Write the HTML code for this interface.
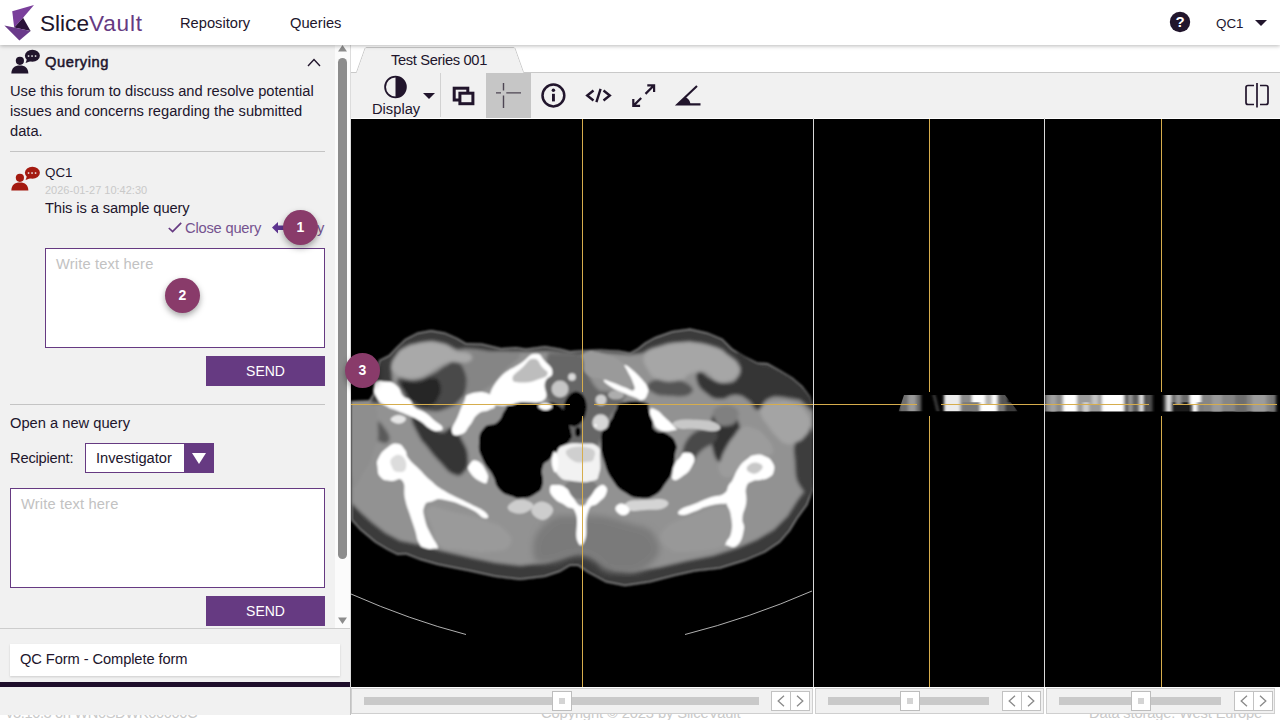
<!DOCTYPE html>
<html><head><meta charset="utf-8">
<style>
*{box-sizing:border-box;margin:0;padding:0}
html,body{width:1280px;height:720px;overflow:hidden;background:#fff;font-family:"Liberation Sans",sans-serif;color:#21152c}
.abs{position:absolute}
svg{position:absolute;overflow:visible}
#hdr{position:absolute;left:0;top:0;width:1280px;height:45px;background:#fff;box-shadow:0 1px 4px rgba(0,0,0,.28);z-index:5}
.t{position:absolute;white-space:nowrap;font-size:14.7px;line-height:17px}
#left{position:absolute;left:0;top:45px;width:350px;height:669.6px;background:#f1f1f1;z-index:2}
.ta{position:absolute;background:#fff;border:1px solid #663a82}
.ph{color:#c2c2c2}
.send{position:absolute;background:#663a82;color:#fff;font-size:14px;text-align:center;width:119px;height:30px;line-height:30px}
.hr{position:absolute;height:1px;background:#c4c4c4}
.badge{position:absolute;width:35px;height:35px;border-radius:50%;background:#893b6a;color:#fff;font-weight:bold;font-size:14px;text-align:center;line-height:35px;box-shadow:0 3px 6px rgba(0,0,0,.35);z-index:9}
#main{position:absolute;left:351px;top:45px;width:929px;height:669px;background:#fff;z-index:2}
.foot{position:absolute;white-space:nowrap;font-size:14.7px;color:#c9c9c9;top:704.5px;line-height:17px;z-index:1}
.vp{position:absolute;top:74px;height:568px;background:#000;overflow:hidden}
.sb{position:absolute;top:643px;height:26px;background:#f1f1f1;border:1px solid #cfcfcf}
.sb .trk{position:absolute;top:8px;height:8px;background:#c9c9c9}
.sb .th{position:absolute;top:2px;width:20px;height:20px;background:#fff;border:1px solid #bdbdbd}
.sb .th i{position:absolute;left:6px;top:6px;width:6px;height:6px;background:#d4d4d4}
.sb .ar{position:absolute;top:2px;width:20px;height:20px;background:#fff;border:1px solid #c2c2c2}
.gold{position:absolute;background:#d6ad4d}
</style></head><body>
<div class="foot" id="f1" style="letter-spacing:-0.4px;left:6px">v3.10.3 on WN0SDWK00000C</div>
<div class="foot" id="f2" style="letter-spacing:-0.1px;left:541px">Copyright © 2023 by SliceVault</div>
<div class="foot" id="f3" style="letter-spacing:-0.15px;left:1089px">Data storage: West Europe</div>

<div id="hdr">
  <svg style="left:0;top:0" width="45" height="45" viewBox="0 0 45 45">
    <polygon points="12.2,11.3 34,5.1 23.1,17.8 14.2,27.5" fill="#7a3f9b"/>
    <polygon points="23.1,17.8 14.2,27.5 30.6,30.9" fill="#2b1239"/>
    <polygon points="4.4,25.6 14.2,27.5 30.6,30.9 19.4,40.6" fill="#6a3a8a"/>
  </svg>
  <div class="t" id="logo1" style="left:40px;top:10px;font-size:22.6px;line-height:27px;color:#21152c">Slice</div>
  <div class="t" id="logo2" style="letter-spacing:0.8px;left:89px;top:10px;font-size:22.6px;line-height:27px;color:#663a82">Vault</div>
  <div class="t" id="nav1" style="left:180px;top:15px">Repository</div>
  <div class="t" id="nav2" style="left:290px;top:15px">Queries</div>
  <svg style="left:1169px;top:11px" width="22" height="22" viewBox="0 0 22 22"><circle cx="11" cy="11" r="10.2" fill="#21152c"/><text x="11" y="16.2" font-family="Liberation Sans" font-weight="bold" font-size="15" fill="#fff" text-anchor="middle">?</text></svg>
  <div class="t" id="usr" style="left:1216px;top:15px;font-size:13.4px">QC1</div>
  <svg style="left:1255px;top:20px" width="12" height="6" viewBox="0 0 12 6"><polygon points="0,0 12,0 6,6" fill="#21152c"/></svg>
</div>

<div id="left">
  <svg id="qicon" style="left:10px;top:4px" width="30" height="25" viewBox="10 166 30 25" fill="#21152c">
    <circle cx="19.9" cy="177.8" r="4.1"/><path d="M11.3 190.6 C11.6 185 14.5 182.6 19.9 182.6 S28 185 28.4 190.6 Z"/>
    <ellipse cx="32.4" cy="172.8" rx="7.5" ry="6"/><polygon points="27,176 25.6,180 31,178"/>
    <g fill="#f1f1f1"><rect x="27.8" y="172.3" width="1.5" height="1.5"/><rect x="31.3" y="172.3" width="1.5" height="1.5"/><rect x="34.8" y="172.3" width="1.5" height="1.5"/></g>
  </svg>
  <div class="t" id="qtitle" style="letter-spacing:0.55px;left:45px;top:9px;-webkit-text-stroke:0.5px #21152c">Querying</div>
  <svg style="left:307px;top:13px" width="14" height="9" viewBox="0 0 14 9"><polyline points="1,8 7,1.6 13,8" fill="none" stroke="#21152c" stroke-width="1.4"/></svg>
  <div class="t" id="p1" style="left:10px;top:38px">Use this forum to discuss and resolve potential</div>
  <div class="t" id="p2" style="left:10px;top:58px">issues and concerns regarding the submitted</div>
  <div class="t" id="p3" style="left:10px;top:78px">data.</div>
  <div class="hr" style="left:10px;top:106px;width:315px"></div>
  <svg id="ricon" style="left:10px;top:121px" width="30" height="25" viewBox="10 166 30 25" fill="#a41a10">
    <circle cx="19.9" cy="177.8" r="4.1"/><path d="M11.3 190.6 C11.6 185 14.5 182.6 19.9 182.6 S28 185 28.4 190.6 Z"/>
    <ellipse cx="32.4" cy="172.8" rx="7.5" ry="6"/><polygon points="27,176 25.6,180 31,178"/>
    <g fill="#f1f1f1"><rect x="27.8" y="172.3" width="1.5" height="1.5"/><rect x="31.3" y="172.3" width="1.5" height="1.5"/><rect x="34.8" y="172.3" width="1.5" height="1.5"/></g>
  </svg>
  <div class="t" id="qc1" style="left:45px;top:119px;font-size:13.4px">QC1</div>
  <div class="t" id="date" style="left:45px;top:139px;font-size:11px;line-height:12px;color:#c9c9c9">2026-01-27 10:42:30</div>
  <div class="t" id="msg" style="letter-spacing:-0.11px;left:45px;top:155px">This is a sample query</div>
  <svg style="left:168px;top:177px" width="14" height="11" viewBox="0 0 14 11"><polyline points="0.8,6 4.6,9.6 13.2,0.8" fill="none" stroke="#663a82" stroke-width="1.7"/></svg>
  <div class="t" id="close" style="letter-spacing:-0.2px;left:185px;top:175px;color:#75538f">Close query</div>
  <svg style="left:272px;top:177px" width="14" height="12" viewBox="0 0 14 12"><path d="M0 5.6 L6 0 V3.4 H14 V8 H6 V11.4 Z" fill="#5e3590"/></svg>
  <div class="t" id="reply" style="letter-spacing:-0.3px;left:288px;top:175px;color:#75538f">Reply</div>
  <div class="ta" style="left:45px;top:203px;width:280px;height:100px"></div>
  <div class="t ph" id="ph1" style="letter-spacing:0.15px;left:56px;top:211px">Write text here</div>
  <div class="send" style="left:206px;top:311px">SEND</div>
  <div class="hr" style="left:10px;top:359px;width:315px"></div>
  <div class="t" id="open" style="left:10px;top:370px">Open a new query</div>
  <div class="t" id="recip" style="letter-spacing:-0.2px;left:10px;top:405px">Recipient:</div>
  <div class="ta" style="left:85px;top:398px;width:129px;height:30px"></div>
  <div class="t" id="inv" style="left:96px;top:405px">Investigator</div>
  <div class="abs" style="left:184px;top:398px;width:30px;height:30px;background:#663a82"></div>
  <svg style="left:192px;top:408px" width="14" height="11" viewBox="0 0 14 11"><polygon points="0,0 14,0 7,11" fill="#fff"/></svg>
  <div class="ta" style="left:10px;top:443px;width:315px;height:100px"></div>
  <div class="t ph" id="ph2" style="letter-spacing:0.15px;left:21px;top:451px">Write text here</div>
  <div class="send" style="left:206px;top:551px">SEND</div>
  <!-- scrollbar -->
  <div class="abs" style="left:335px;top:0;width:15px;height:583px;background:#fbfbfb"></div>
  <svg style="left:338px;top:0px" width="9" height="7" viewBox="0 0 9 7"><polygon points="0,6.5 4.5,0 9,6.5" fill="#8c8c8c"/></svg>
  <div class="abs" style="left:338px;top:13px;width:9px;height:500.5px;background:#8c8c8c;border-radius:4.5px"></div>
  <svg style="left:338px;top:572px" width="9" height="7" viewBox="0 0 9 7"><polygon points="0,0.5 4.5,7 9,0.5" fill="#8c8c8c"/></svg>
  <div class="hr" style="left:0;top:583px;width:350px;background:#cdcdcd"></div>
  <div class="abs" style="left:10px;top:599px;width:330px;height:32px;background:#fff;box-shadow:0 1px 2px rgba(0,0,0,.15)"></div>
  <div class="t" id="qcform" style="letter-spacing:-0.1px;left:20px;top:606px">QC Form - Complete form</div>
  <div class="abs" style="left:0;top:637px;width:350px;height:5px;background:#1f0f2c"></div>
  <div class="abs" style="left:350px;top:0;width:1px;height:669px;background:#dcdcdc"></div><div class="abs" style="left:350px;top:642px;width:1px;height:28px;background:#c2c2c2"></div>
</div>

<div id="main">
  <!-- tab -->
  <svg style="left:0;top:0" width="929" height="30" viewBox="351 45 929 30">
    <path d="M351 72.5 H356.5 L365 48.5 Q365.5 47.5 367 47.5 H513 Q514.5 47.5 515 48.5 L523.5 72.5 H1280" fill="none" stroke="#c9c9c9" stroke-width="1"/>
    <path d="M356.8 73 L365.3 49 Q365.7 48 367 48 H513 Q514.3 48 514.7 49 L523.2 73 Z" fill="#f1f1f1"/>
  </svg>
  <div class="t" id="tab" style="letter-spacing:-0.35px;left:40px;top:7px">Test Series 001</div>
  <div class="abs" id="tb" style="left:0;top:28px;width:929px;height:45px;background:#f1f1f1"></div>
  <div class="abs" style="left:135px;top:28px;width:45px;height:45px;background:#c6c6c6"></div>
  <div class="abs" style="left:89px;top:28px;width:1px;height:44px;background:#d2d2d2"></div>
  <div class="t" id="disp" style="left:21px;top:56px">Display</div>
  <svg style="left:0;top:28px" width="929" height="45" viewBox="351 73 929 45">
    <g fill="#21152c" stroke="none">
      <circle cx="395.5" cy="87" r="10.4" fill="none" stroke="#21152c" stroke-width="1.8"/>
      <path d="M395.5 76.6 A10.4 10.4 0 0 1 395.5 97.4 Z"/>
      <polygon points="423,93 435,93 429,99"/>
      <rect x="454.2" y="88.2" width="13.6" height="11.8" fill="none" stroke="#21152c" stroke-width="3"/>
      <rect x="459.9" y="93.2" width="13" height="10.5" fill="#f1f1f1" stroke="#21152c" stroke-width="3"/>
      <circle cx="553.4" cy="95.5" r="10.9" fill="none" stroke="#21152c" stroke-width="2.5"/>
      <rect x="552" y="93.8" width="2.9" height="7.6"/><circle cx="553.4" cy="90.2" r="1.75"/>
    </g>
    <g stroke="#4d4553" stroke-width="1.4" fill="none"><path d="M503.5 83 V90.4 M503.5 95.4 V108 M496 92.9 H501 M506.3 92.9 H521"/></g>
    <g stroke="#21152c" stroke-width="2.4" fill="none" stroke-linejoin="miter">
      <path d="M593.5 90.5 L587.2 95.5 L593.5 100.5 M603.5 90.5 L609.8 95.5 L603.5 100.5 M600.6 88.8 L596.4 102.2"/>
    </g>
    <g stroke="#21152c" stroke-width="2.2" fill="none">
      <path d="M647.3 85.3 H654.1 V92.1 M654.1 85.3 L645.5 93.9 M633.3 99.1 V105.9 H640.1 M633.3 105.9 L641.2 98"/>
    </g>
    <g stroke="#21152c" stroke-width="2.1" fill="none"><path d="M700.5 104.4 H677.5 L697 86"/></g>
    <path d="M678 104.4 L685.5 97 Q690 99.5 690.5 104.4 Z" fill="#21152c"/>
    <g stroke="#21152c" stroke-width="1.7" fill="none">
      <path d="M1254 85.5 H1248 Q1246 85.5 1246 87.5 V102.5 Q1246 104.5 1248 104.5 H1254 M1260 85.5 H1266 Q1268 85.5 1268 87.5 V102.5 Q1268 104.5 1266 104.5 H1260 M1257 83 V107.5"/>
    </g>
  </svg>
  <!-- viewports -->
  <div class="vp" id="vp1" style="left:0;width:462px"><!--CT--><svg id="ct" style="left:0;top:0" width="462" height="568" viewBox="351 119 462 568">
<defs>
<filter id="b1" x="-5%" y="-5%" width="110%" height="110%"><feGaussianBlur stdDeviation="0.8"/></filter>
<filter id="b2" x="-5%" y="-5%" width="110%" height="110%"><feGaussianBlur stdDeviation="1.7"/></filter>
<filter id="b4" x="-5%" y="-5%" width="110%" height="110%"><feGaussianBlur stdDeviation="3"/></filter>
<path id="bodyp" d="M351 401 L369 400.5 L373 394 L374 386 L376 372 L379 360 L389 355 L396 347.5 L405 339 L417.5 332.5 L431 330 L445 332.5 L457.5 338 L466 343 L482 343.5 L501 348 L516 347 L526 348.5 L545 346 L560 348.5 L570 351 L585 350 L600 349.4 L619 350.6 L630 352.5 L637.5 348.5 L645 342.5 L655 337 L672 331 L690 328.5 L707.5 332.5 L722.5 338.75 L732.5 348.75 L745 356.25 L757.5 362.5 L767.5 363 L780 370 L792.5 377.5 L802.5 386 L810 396 L813 405 L813 490 L807.5 505 L797.5 518.75 L790 531 L780 542.5 L765 552.5 L745 561 L720 568.75 L695 571.5 L675 576 L650 582.5 L625 586.25 L606 582.5 L587.5 572.5 L578 566 L570 566 L560 572 L545 577 L520 580 L495 577 L470 571.5 L456 568.75 L437.5 565 L420 560 L406 554.4 L397.5 555 L387.5 550 L375 542.5 L360 530 L351 520 Z"/>
<clipPath id="bodyclip"><use href="#bodyp"/></clipPath>
</defs>
<g filter="url(#b1)">
  <use href="#bodyp" fill="#3b3b3b"/>
  <g clip-path="url(#bodyclip)">
    <use href="#bodyp" fill="none" stroke="#8c8c8c" stroke-width="2.4"/>
    <g filter="url(#b2)">
    <!-- general muscle mass -->
    <path d="M351 404 L380 403 L392 382 L391 367 L396 356 L405 348.5 L418 342.5 L432 340.5 L446 343.5 L456 349 L468 351 L500 351 L526 351.5 L550 351 L582 354 L600 352 L630 354.5 L642 353 L652 348 L668 343 L690 341 L712 346 L728 355 L738 365 L750 380 L775 396 L800 400 L813 412 L813 480 L798 500 L788 516 L774 530 L757 540 L738 548 L713 556 L688 561 L658 568 L632 572 L614 570 L600 562 L590 555 L578 553 L565 557 L547 563 L520 566 L495 563 L471 558 L441 551 L420 545 L400 541 L385 533 L371 522 L361 513 L351 503 Z" fill="#929292"/>
    <!-- darker paraspinal region -->
    <!-- upper centre muscle tone (slightly darker striated) -->
    <path d="M456.0 350.0 C468.0 345.7 482.9 350.9 500.0 352.0 C517.1 353.1 518.7 349.2 520.0 354.0 C521.3 358.8 513.0 361.5 505.0 370.0 C497.0 378.5 499.9 380.1 490.0 386.0 C480.1 391.9 477.3 396.8 468.0 392.0 C458.7 387.2 458.2 379.2 455.0 368.0 C451.8 356.8 444.0 354.3 456.0 350.0 Z" fill="#858585"/>
    <path d="M548 353 C560 353 575 354 584 355 C586 368 590 384 600 391 C610 392 620 391 626 393 C624 402 616 410 611 416 C606 426 604 438 598 446 C588 448 574 448 566 446 C562 436 561 420 560 410 C554 406 548 402 546 396 C543 388 544 368 548 353 Z" fill="#666"/>
    <!-- dark fat zones -->
    <path d="M398.0 379.0 C401.2 375.8 405.9 381.3 415.0 380.0 C424.1 378.7 424.0 377.7 432.0 374.0 C440.0 370.3 438.9 369.2 445.0 366.0 C451.1 362.8 449.9 360.9 455.0 362.0 C460.1 363.1 461.1 363.1 464.0 370.0 C466.9 376.9 467.1 380.0 466.0 388.0 C464.9 396.0 464.8 394.7 460.0 400.0 C455.2 405.3 456.0 405.1 448.0 408.0 C440.0 410.9 439.6 412.1 430.0 411.0 C420.4 409.9 419.2 409.1 412.0 404.0 C404.8 398.9 406.7 398.7 403.0 392.0 C399.3 385.3 394.8 382.2 398.0 379.0 Z" fill="#484848"/><path d="M402.0 382.0 C405.2 379.1 410.0 383.1 418.0 382.0 C426.0 380.9 426.1 377.5 432.0 378.0 C437.9 378.5 438.4 378.7 440.0 384.0 C441.6 389.3 441.2 392.1 438.0 398.0 C434.8 403.9 434.4 404.9 428.0 406.0 C421.6 407.1 419.9 405.5 414.0 402.0 C408.1 398.5 409.2 398.3 406.0 393.0 C402.8 387.7 398.8 384.9 402.0 382.0 Z" fill="#262626"/>
    <path d="M412.0 416.0 C413.9 412.5 417.5 416.7 425.0 421.0 C432.5 425.3 432.8 430.1 440.0 432.0 C447.2 433.9 446.1 425.9 452.0 428.0 C457.9 430.1 457.7 432.0 462.0 440.0 C466.3 448.0 467.5 449.5 468.0 458.0 C468.5 466.5 468.0 467.7 464.0 472.0 C460.0 476.3 459.4 476.7 453.0 474.0 C446.6 471.3 446.7 468.9 440.0 462.0 C433.3 455.1 433.9 455.5 428.0 448.0 C422.1 440.5 422.3 442.5 418.0 434.0 C413.7 425.5 410.1 419.5 412.0 416.0 Z" fill="#343434"/>
    <path d="M359.0 420.0 C361.1 416.3 364.8 415.3 372.0 418.0 C379.2 420.7 381.7 423.6 386.0 430.0 C390.3 436.4 390.7 439.3 388.0 442.0 C385.3 444.7 382.4 442.7 376.0 440.0 C369.6 437.3 368.5 437.3 364.0 432.0 C359.5 426.7 356.9 423.7 359.0 420.0 Z" fill="#5a5a5a"/>
    <path d="M738.0 352.0 C742.5 351.7 745.8 358.7 757.0 364.0 C768.2 369.3 768.5 366.1 780.0 372.0 C791.5 377.9 791.2 378.0 800.0 386.0 C808.8 394.0 809.5 395.6 813.0 402.0 C816.5 408.4 816.5 410.5 813.0 410.0 C809.5 409.5 807.5 403.5 800.0 400.0 C792.5 396.5 793.5 397.3 785.0 397.0 C776.5 396.7 775.2 395.5 768.0 399.0 C760.8 402.5 763.3 409.7 758.0 410.0 C752.7 410.3 754.1 404.0 748.0 400.0 C741.9 396.0 742.5 395.3 735.0 395.0 C727.5 394.7 727.7 399.5 720.0 399.0 C712.3 398.5 712.1 397.8 706.0 393.0 C699.9 388.2 698.6 386.6 697.0 381.0 C695.4 375.4 696.0 372.5 700.0 372.0 C704.0 371.5 704.8 376.1 712.0 379.0 C719.2 381.9 720.1 383.5 727.0 383.0 C733.9 382.5 734.5 381.8 738.0 377.0 C741.5 372.2 740.0 371.7 740.0 365.0 C740.0 358.3 733.5 352.3 738.0 352.0 Z" fill="#343434"/>
    <path d="M650.0 382.0 C654.8 378.8 659.9 379.5 670.0 380.0 C680.1 380.5 682.7 380.3 688.0 384.0 C693.3 387.7 694.8 390.8 690.0 394.0 C685.2 397.2 680.1 396.5 670.0 396.0 C659.9 395.5 657.3 395.7 652.0 392.0 C646.7 388.3 645.2 385.2 650.0 382.0 Z" fill="#555"/>
    <path d="M714.0 414.0 C718.3 408.7 721.1 406.3 728.0 410.0 C734.9 413.7 738.9 420.0 740.0 428.0 C741.1 436.0 736.0 433.6 732.0 440.0 C728.0 446.4 728.2 446.1 725.0 452.0 C721.8 457.9 723.2 462.5 720.0 462.0 C716.8 461.5 715.1 458.5 713.0 450.0 C710.9 441.5 711.7 439.6 712.0 430.0 C712.3 420.4 709.7 419.3 714.0 414.0 Z" fill="#303030"/>
    <path d="M797.0 440.0 C801.8 432.0 808.7 419.2 813.0 432.0 C817.3 444.8 816.5 473.6 813.0 488.0 C809.5 502.4 804.8 492.9 800.0 486.0 C795.2 479.1 795.8 474.3 795.0 462.0 C794.2 449.7 792.2 448.0 797.0 440.0 Z" fill="#3c3c3c"/>
    <path d="M690.0 436.0 C698.0 427.5 705.1 428.9 712.0 430.0 C718.9 431.1 719.2 434.1 716.0 440.0 C712.8 445.9 706.9 445.1 700.0 452.0 C693.1 458.9 694.8 463.3 690.0 466.0 C685.2 468.7 682.0 470.0 682.0 462.0 C682.0 454.0 682.0 444.5 690.0 436.0 Z" fill="#4a4a4a"/>
    <!-- brighter muscles -->
    <path d="M391.0 366.0 C391.5 361.5 392.3 360.1 396.0 355.0 C399.7 349.9 399.1 350.2 405.0 347.0 C410.9 343.8 410.8 344.3 418.0 343.0 C425.2 341.7 424.5 341.5 432.0 342.0 C439.5 342.5 439.6 342.6 446.0 345.0 C452.4 347.4 449.6 348.6 456.0 351.0 C462.4 353.4 466.8 351.1 470.0 354.0 C473.2 356.9 473.3 359.9 468.0 362.0 C462.7 364.1 458.0 360.7 450.0 362.0 C442.0 363.3 444.1 363.8 438.0 367.0 C431.9 370.2 433.1 371.1 427.0 374.0 C420.9 376.9 421.7 377.2 415.0 378.0 C408.3 378.8 407.6 378.6 402.0 377.0 C396.4 375.4 396.9 374.9 394.0 372.0 C391.1 369.1 390.5 370.5 391.0 366.0 Z" fill="#a9a9a9"/>
    <path d="M645.0 354.0 C648.7 347.6 650.8 349.2 662.0 346.0 C673.2 342.8 673.2 341.9 687.0 342.0 C700.8 342.1 702.6 342.8 713.8 346.2 C724.9 349.7 722.1 350.0 728.8 355.0 C735.4 360.0 736.4 359.7 738.8 365.0 C741.1 370.3 740.5 370.7 737.5 375.0 C734.5 379.3 733.2 379.6 727.5 381.2 C721.8 382.9 720.9 382.9 716.2 381.2 C711.6 379.6 713.7 377.7 710.0 375.0 C706.3 372.3 707.8 371.5 702.5 371.2 C697.2 371.0 696.0 371.7 690.0 374.0 C684.0 376.3 688.0 378.4 680.0 380.0 C672.0 381.6 668.5 382.7 660.0 380.0 C651.5 377.3 652.0 376.9 648.0 370.0 C644.0 363.1 641.3 360.4 645.0 354.0 Z" fill="#a6a6a6"/>
    <path d="M762.5 406.2 C766.2 402.9 766.3 403.2 775.0 402.5 C783.7 401.8 786.7 401.1 795.0 403.8 C803.3 406.4 802.2 406.8 806.2 412.5 C810.2 418.2 810.3 418.7 810.0 425.0 C809.7 431.3 809.0 431.6 805.0 436.2 C801.0 440.9 800.0 440.5 795.0 442.5 C790.0 444.5 790.9 445.1 786.2 443.8 C781.6 442.4 782.5 442.5 777.5 437.5 C772.5 432.5 771.8 431.0 767.5 425.0 C763.2 419.0 762.6 420.0 761.2 415.0 C759.9 410.0 758.8 409.6 762.5 406.2 Z" fill="#a4a4a4"/>
    <path d="M742.5 427.5 C748.2 425.5 749.0 426.4 755.0 428.8 C761.0 431.1 760.3 431.2 765.0 436.2 C769.7 441.2 771.2 442.5 772.5 447.5 C773.8 452.5 774.7 453.0 770.0 455.0 C765.3 457.0 761.7 453.7 755.0 455.0 C748.3 456.3 749.7 456.0 745.0 460.0 C740.3 464.0 742.2 465.3 737.5 470.0 C732.8 474.7 732.5 477.5 727.5 477.5 C722.5 477.5 720.4 475.0 718.8 470.0 C717.1 465.0 719.2 464.8 721.2 458.8 C723.2 452.8 722.9 453.5 726.2 447.5 C729.6 441.5 729.4 441.6 733.8 436.2 C738.1 430.9 736.8 429.5 742.5 427.5 Z" fill="#9c9c9c"/>
    <path d="M716.0 408.0 C721.1 404.5 728.4 403.8 734.0 407.0 C739.6 410.2 739.7 414.9 737.0 420.0 C734.3 425.1 729.9 426.0 724.0 426.0 C718.1 426.0 717.1 424.8 715.0 420.0 C712.9 415.2 710.9 411.5 716.0 408.0 Z" fill="#808080"/>
    <path d="M428.0 508.0 C434.1 503.7 439.8 508.8 455.0 512.0 C470.2 515.2 471.7 515.2 485.0 520.0 C498.3 524.8 498.3 523.3 505.0 530.0 C511.7 536.7 514.0 539.1 510.0 545.0 C506.0 550.9 503.3 550.7 490.0 552.0 C476.7 553.3 473.3 551.6 460.0 550.0 C446.7 548.4 447.5 551.9 440.0 546.0 C432.5 540.1 435.2 538.1 432.0 528.0 C428.8 517.9 421.9 512.3 428.0 508.0 Z" fill="#9a9a9a"/>
    <path d="M662.0 532.0 C667.9 523.5 672.4 522.4 690.0 516.0 C707.6 509.6 717.3 502.9 728.0 508.0 C738.7 513.1 731.1 524.9 730.0 535.0 C728.9 545.1 734.7 541.5 724.0 546.0 C713.3 550.5 704.9 551.5 690.0 552.0 C675.1 552.5 675.5 553.3 668.0 548.0 C660.5 542.7 656.1 540.5 662.0 532.0 Z" fill="#989898"/>
    <path d="M351.0 402.0 C356.6 381.2 364.8 394.5 372.0 402.0 C379.2 409.5 377.5 417.2 378.0 430.0 C378.5 442.8 377.5 439.3 374.0 450.0 C370.5 460.7 371.1 462.0 365.0 470.0 C358.9 478.0 354.7 498.1 351.0 480.0 C347.3 461.9 345.4 422.8 351.0 402.0 Z" fill="#8e8e8e"/>
    </g>
    <g filter="url(#b4)"><path d="M545.0 524.0 C557.3 513.3 558.7 516.5 580.0 516.0 C601.3 515.5 604.7 516.1 625.0 522.0 C645.3 527.9 649.9 526.3 656.0 538.0 C662.1 549.7 659.7 556.9 648.0 566.0 C636.3 575.1 626.9 573.6 612.0 572.0 C597.1 570.4 601.9 564.3 592.0 560.0 C582.1 555.7 585.7 555.5 575.0 556.0 C564.3 556.5 562.9 562.0 552.0 562.0 C541.1 562.0 535.9 566.1 534.0 556.0 C532.1 545.9 532.7 534.7 545.0 524.0 Z" fill="#7a7a7a"/></g>
    <!-- lungs and trachea -->
    <path d="M505.0 410.0 C509.0 404.9 503.2 405.0 512.5 403.0 C521.8 401.0 527.9 402.0 540.0 402.5 C552.1 403.0 551.1 400.9 558.0 405.0 C564.9 409.1 562.5 410.8 566.0 418.0 C569.5 425.2 569.9 426.1 571.0 432.0 C572.1 437.9 572.9 435.5 570.0 440.0 C567.1 444.5 565.3 443.9 560.0 449.0 C554.7 454.1 554.7 454.1 550.0 459.0 C545.3 463.9 544.5 460.6 542.5 467.5 C540.5 474.4 544.5 477.9 542.5 485.0 C540.5 492.1 540.3 490.5 535.0 494.0 C529.7 497.5 528.9 497.5 522.5 498.0 C516.1 498.5 517.3 498.4 511.0 496.0 C504.7 493.6 503.9 494.6 499.0 489.0 C494.1 483.4 496.9 483.0 492.5 475.0 C488.1 467.0 486.1 467.5 482.5 459.0 C478.9 450.5 478.6 451.3 479.0 443.0 C479.4 434.7 479.1 433.6 484.0 428.0 C488.9 422.4 491.9 426.8 497.5 422.0 C503.1 417.2 501.0 415.1 505.0 410.0 Z" fill="#000"/>
    <path d="M611.0 420.0 C614.2 415.2 612.9 414.7 616.0 410.0 C619.1 405.3 614.8 404.5 622.5 402.5 C630.2 400.5 637.9 400.5 645.0 402.5 C652.1 404.5 647.0 405.3 649.0 410.0 C651.0 414.7 650.9 414.7 652.5 420.0 C654.1 425.3 651.0 426.3 655.0 430.0 C659.0 433.7 661.9 430.3 667.5 434.0 C673.1 437.7 674.0 438.4 676.0 444.0 C678.0 449.6 675.9 447.8 675.0 455.0 C674.1 462.2 675.2 463.3 672.5 471.0 C669.8 478.7 669.7 477.6 665.0 484.0 C660.3 490.4 661.7 491.3 655.0 495.0 C648.3 498.7 648.0 498.7 640.0 498.0 C632.0 497.3 632.3 497.3 625.0 492.5 C617.7 487.7 618.1 488.4 612.5 480.0 C606.9 471.6 607.1 471.0 604.0 461.0 C600.9 451.0 601.0 451.3 601.0 442.5 C601.0 433.7 601.3 434.0 604.0 428.0 C606.7 422.0 607.8 424.8 611.0 420.0 Z" fill="#000"/>
    <ellipse cx="575" cy="409" rx="11.5" ry="17.5" transform="rotate(8 575 409)" fill="#000"/>
    <ellipse cx="578" cy="432" rx="3" ry="5" fill="#000"/>
    <!-- vessels -->
    <circle cx="560" cy="389" r="8.5" fill="#c6c6c6"/><circle cx="572" cy="377" r="3.8" fill="#dcdcdc"/>
    <circle cx="601" cy="400" r="5.5" fill="#d0d0d0"/><ellipse cx="616" cy="395" rx="8" ry="4.5" fill="#adadad"/><circle cx="600.6" cy="422.5" r="8.3" fill="#d6d6d6"/><circle cx="595.6" cy="425.6" r="1.3" fill="#fff"/>
    <!-- spinal canal -->
    <ellipse cx="581" cy="489" rx="17" ry="10" fill="#7c7c7c"/>
    <!-- bones -->
    <g fill="#fff">
      <path d="M374.0 384.0 C376.4 379.6 379.9 381.0 386.0 381.5 C392.1 382.0 392.5 382.1 397.0 386.0 C401.5 389.9 399.5 392.3 403.0 396.0 C406.5 399.7 406.8 396.9 410.0 400.0 C413.2 403.1 411.0 404.2 415.0 407.5 C419.0 410.8 419.7 408.9 425.0 412.5 C430.3 416.1 430.3 417.0 435.0 421.0 C439.7 425.0 441.8 424.8 442.5 427.5 C443.2 430.2 440.8 430.7 437.5 431.0 C434.2 431.3 434.7 431.4 430.0 428.8 C425.3 426.1 425.3 424.4 420.0 421.0 C414.7 417.6 415.9 418.7 410.0 416.0 C404.1 413.3 404.4 413.7 398.0 411.0 C391.6 408.3 391.6 409.5 386.0 406.0 C380.4 402.5 380.2 403.9 377.0 398.0 C373.8 392.1 371.6 388.4 374.0 384.0 Z"/>
      <path d="M392.5 417.0 C395.5 414.8 399.2 414.3 403.0 416.0 C406.8 417.7 406.8 419.8 403.8 422.0 C400.8 424.2 397.8 424.2 394.0 422.5 C390.2 420.8 389.5 419.2 392.5 417.0 Z" fill="#e6e6e6"/>
      <!-- bone B -->
      <path d="M470.0 394.0 C476.7 391.9 482.3 391.1 489.0 394.0 C495.7 396.9 495.0 400.7 495.0 405.0 C495.0 409.3 493.5 407.6 489.0 410.0 C484.5 412.4 483.1 410.0 478.0 414.0 C472.9 418.0 474.3 419.7 470.0 425.0 C465.7 430.3 466.8 432.1 462.0 434.0 C457.2 435.9 453.1 436.8 452.0 432.0 C450.9 427.2 454.8 424.0 458.0 416.0 C461.2 408.0 460.8 407.9 464.0 402.0 C467.2 396.1 463.3 396.1 470.0 394.0 Z"/>
      <!-- left clavicle head -->
      <path d="M488.8 401.2 C489.8 394.2 490.4 388.8 498.8 378.8 C507.1 368.8 510.3 370.4 520.0 363.8 C529.7 357.1 528.3 354.4 535.0 353.8 C541.7 353.1 540.3 356.2 545.0 361.2 C549.7 366.2 552.5 366.8 552.5 372.5 C552.5 378.2 547.3 375.2 545.0 382.5 C542.7 389.8 550.4 394.7 543.8 400.0 C537.1 405.3 528.7 401.2 520.0 402.5 C511.3 403.8 517.7 404.3 511.0 405.0 C504.3 405.7 500.9 406.0 495.0 405.0 C489.1 404.0 487.8 408.2 488.8 401.2 Z"/>
      <path d="M512.5 378.8 C512.2 374.8 516.8 372.8 522.5 367.5 C528.2 362.2 528.4 358.8 533.8 358.8 C539.1 358.8 538.8 363.5 542.5 367.5 C546.2 371.5 548.2 370.8 547.5 373.8 C546.8 376.8 546.3 376.4 540.0 378.8 C533.7 381.1 531.1 382.5 523.8 382.5 C516.4 382.5 512.8 382.8 512.5 378.8 Z" fill="#bdbdbd"/>
      <path d="M540.0 404.0 C543.0 402.3 546.7 402.3 550.0 404.0 C553.3 405.7 553.0 407.3 550.0 409.0 C547.0 410.7 544.3 410.7 541.0 409.0 C537.7 407.3 537.0 405.7 540.0 404.0 Z"/>
      <!-- right clavicle head -->
      <path d="M585.0 352.5 C590.3 350.2 593.1 350.4 603.8 353.8 C614.4 357.1 617.3 357.7 625.0 365.0 C632.7 372.3 632.5 375.2 632.5 381.2 C632.5 387.2 632.7 387.8 625.0 387.5 C617.3 387.2 613.8 383.3 603.8 380.0 C593.8 376.7 592.8 379.7 587.5 375.0 C582.2 370.3 584.4 368.5 583.8 362.5 C583.1 356.5 579.7 354.8 585.0 352.5 Z" fill="#9a9a9a"/>
      <path d="M603.8 380.0 C604.4 379.0 606.8 380.5 612.5 382.5 C618.2 384.5 619.3 385.5 625.0 387.5 C630.7 389.5 631.8 391.7 633.8 390.0 C635.8 388.3 634.2 386.2 632.5 381.2 C630.8 376.2 629.5 375.6 627.5 371.2 C625.5 366.9 623.3 365.0 625.0 365.0 C626.7 365.0 629.1 367.2 633.8 371.2 C638.4 375.2 638.8 375.7 642.5 380.0 C646.2 384.3 646.2 383.8 647.5 387.5 C648.8 391.2 648.8 390.4 647.5 393.8 C646.2 397.1 645.8 399.0 642.5 400.0 C639.2 401.0 640.3 399.5 635.0 397.5 C629.7 395.5 629.2 395.5 622.5 392.5 C615.8 389.5 615.0 389.6 610.0 386.2 C605.0 382.9 603.1 381.0 603.8 380.0 Z"/>
      <!-- right ribs -->
      <path d="M650.0 410.0 C651.0 407.3 652.2 408.0 656.2 410.0 C660.2 412.0 660.0 412.8 665.0 417.5 C670.0 422.2 672.3 424.2 675.0 427.5 C677.7 430.8 679.0 429.3 675.0 430.0 C671.0 430.7 666.0 432.7 660.0 430.0 C654.0 427.3 655.2 425.3 652.5 420.0 C649.8 414.7 649.0 412.7 650.0 410.0 Z"/>
      <path d="M676.0 421.0 C681.9 418.9 688.9 419.2 700.0 420.0 C711.1 420.8 713.2 421.1 717.5 424.0 C721.8 426.9 721.7 429.7 716.0 431.0 C710.3 432.3 706.1 429.8 696.0 429.0 C685.9 428.2 683.3 430.1 678.0 428.0 C672.7 425.9 670.1 423.1 676.0 421.0 Z" fill="#c8c8c8"/>
      <path d="M685.0 452.5 C688.7 452.2 692.1 452.2 693.8 456.2 C695.4 460.2 694.2 462.2 691.2 467.5 C688.2 472.8 687.2 472.9 682.5 476.2 C677.8 479.6 676.4 481.0 673.8 480.0 C671.1 479.0 672.2 476.8 672.5 472.5 C672.8 468.2 673.0 467.8 675.0 463.8 C677.0 459.8 677.3 460.5 680.0 457.5 C682.7 454.5 681.3 452.8 685.0 452.5 Z"/>
      <path d="M470.0 463.8 C472.0 460.7 473.2 459.1 477.5 461.0 C481.8 462.9 483.3 465.9 486.0 471.0 C488.7 476.1 488.4 476.9 487.5 480.0 C486.6 483.1 487.2 484.5 482.5 482.5 C477.8 480.5 473.3 477.5 470.0 472.5 C466.7 467.5 468.0 466.8 470.0 463.8 Z"/>
      <!-- left scapula -->
      <path d="M387.5 447.5 C392.5 443.8 392.8 443.1 397.5 443.8 C402.2 444.4 402.0 446.0 405.0 450.0 C408.0 454.0 404.8 453.4 408.8 458.8 C412.8 464.1 414.3 464.3 420.0 470.0 C425.7 475.7 423.3 474.3 430.0 480.0 C436.7 485.7 434.3 484.9 445.0 491.2 C455.7 497.6 459.1 497.9 470.0 503.8 C480.9 509.6 482.3 509.2 486.0 513.0 C489.7 516.8 488.3 519.1 484.0 518.0 C479.7 516.9 480.4 513.5 470.0 508.8 C459.6 503.9 455.0 502.0 445.0 500.0 C435.0 498.0 438.0 499.6 432.5 501.2 C427.0 502.9 426.4 501.2 424.4 506.2 C422.4 511.2 423.2 512.3 425.0 520.0 C426.8 527.7 427.9 528.0 431.2 535.0 C434.6 542.0 436.5 542.6 437.5 546.2 C438.5 549.9 438.3 548.0 435.0 548.5 C431.7 549.0 429.3 549.6 425.0 548.0 C420.7 546.4 421.4 547.3 418.8 542.5 C416.1 537.7 417.3 537.3 415.0 530.0 C412.7 522.7 412.7 523.3 410.0 515.0 C407.3 506.7 407.0 507.8 405.0 498.8 C403.0 489.7 406.2 485.7 402.5 481.0 C398.8 476.3 396.7 481.9 391.0 481.0 C385.3 480.1 384.6 481.1 381.0 477.5 C377.4 473.9 378.1 472.8 377.5 467.5 C376.9 462.2 376.1 462.8 378.8 457.5 C381.4 452.2 382.5 451.2 387.5 447.5 Z"/>
      <path d="M392.0 458.0 C394.7 455.1 398.3 453.3 402.0 456.0 C405.7 458.7 407.1 463.7 406.0 468.0 C404.9 472.3 401.7 472.3 398.0 472.0 C394.3 471.7 393.6 470.7 392.0 467.0 C390.4 463.3 389.3 460.9 392.0 458.0 Z" fill="#dcdcdc"/>
      <!-- right scapula -->
      <path d="M755.0 455.0 C759.7 454.3 760.3 454.2 765.0 456.2 C769.7 458.2 770.2 458.5 772.5 462.5 C774.8 466.5 774.8 467.2 773.8 471.2 C772.8 475.2 772.4 475.2 768.8 477.5 C765.1 479.8 764.3 479.0 760.0 480.0 C755.7 481.0 756.2 479.2 752.5 481.2 C748.8 483.2 747.9 481.8 746.2 487.5 C744.6 493.2 747.2 494.5 746.2 502.5 C745.2 510.5 743.2 510.2 742.5 517.5 C741.8 524.8 745.1 522.7 743.8 530.0 C742.4 537.3 741.8 540.8 737.5 545.0 C733.2 549.2 730.5 546.3 727.5 545.6 C724.5 544.9 725.2 546.0 726.2 542.5 C727.2 539.0 729.9 539.2 731.2 532.5 C732.6 525.8 732.2 524.5 731.2 517.5 C730.2 510.5 729.5 509.9 727.5 506.2 C725.5 502.6 729.1 503.8 723.8 503.8 C718.4 503.8 715.2 504.2 707.5 506.2 C699.8 508.2 701.8 508.9 695.0 511.2 C688.2 513.6 686.0 515.3 682.0 515.0 C678.0 514.7 676.5 513.0 680.0 510.0 C683.5 507.0 687.0 507.1 695.0 503.8 C703.0 500.4 702.3 500.2 710.0 497.5 C717.7 494.8 718.8 497.1 723.8 493.8 C728.8 490.4 726.4 488.7 728.8 485.0 C731.1 481.3 729.8 484.7 732.5 480.0 C735.2 475.3 734.8 473.2 738.8 467.5 C742.8 461.8 743.2 462.1 747.5 458.8 C751.8 455.4 750.3 455.7 755.0 455.0 Z"/>
      <path d="M748.8 465.0 C752.1 462.1 756.2 461.8 760.0 463.8 C763.8 465.8 763.3 468.1 760.0 471.0 C756.7 473.9 753.8 474.5 750.0 472.5 C746.2 470.5 745.4 467.9 748.8 465.0 Z" fill="#c8c8c8"/>
      <!-- vertebra -->
      <path d="M557.0 452.0 C559.4 446.9 558.3 447.3 565.0 445.0 C571.7 442.7 573.5 443.2 582.0 443.5 C590.5 443.8 592.2 442.1 597.0 446.0 C601.8 449.9 599.5 450.5 600.0 458.0 C600.5 465.5 601.1 467.9 599.0 474.0 C596.9 480.1 599.2 479.1 592.0 481.0 C584.8 482.9 580.8 482.3 572.0 481.0 C563.2 479.7 563.3 480.5 559.0 476.0 C554.7 471.5 556.5 470.4 556.0 464.0 C555.5 457.6 554.6 457.1 557.0 452.0 Z" fill="#f2f2f2"/>
      <path d="M568.0 449.0 C572.8 445.8 583.1 445.6 590.0 448.0 C596.9 450.4 595.1 454.3 594.0 458.0 C592.9 461.7 591.9 461.5 586.0 462.0 C580.1 462.5 576.8 463.5 572.0 460.0 C567.2 456.5 563.2 452.2 568.0 449.0 Z" fill="#cfcfcf"/>
      <path d="M552.5 455.0 C553.8 450.3 555.3 450.3 557.0 455.0 C558.7 459.7 558.8 464.3 557.5 469.0 C556.2 473.7 554.7 473.7 553.0 469.0 C551.3 464.3 551.2 459.7 552.5 455.0 Z"/>
      <path d="M550.0 488.0 C550.5 484.5 551.7 485.0 556.0 485.0 C560.3 485.0 561.6 484.8 566.0 488.0 C570.4 491.2 568.2 492.2 572.5 497.0 C576.8 501.8 577.3 506.0 582.0 506.0 C586.7 506.0 585.7 502.1 590.0 497.0 C594.3 491.9 594.0 489.9 598.0 487.0 C602.0 484.1 602.9 484.1 605.0 486.0 C607.1 487.9 607.9 489.5 606.0 494.0 C604.1 498.5 602.8 498.2 598.0 503.0 C593.2 507.8 591.5 502.1 588.0 512.0 C584.5 521.9 587.9 532.5 585.0 540.0 C582.1 547.5 579.4 546.9 577.0 540.0 C574.6 533.1 578.9 523.1 576.0 514.0 C573.1 504.9 571.9 510.3 566.0 506.0 C560.1 501.7 558.3 502.8 554.0 498.0 C549.7 493.2 549.5 491.5 550.0 488.0 Z"/>
      <path d="M511.0 503.0 C516.0 499.2 521.7 498.7 528.0 501.0 C534.3 503.3 535.0 506.2 530.0 510.0 C525.0 513.8 519.3 514.8 513.0 512.5 C506.7 510.2 506.0 506.8 511.0 503.0 Z" fill="#cdcdcd"/><path d="M534.0 505.0 C538.3 500.5 543.7 500.3 549.0 504.0 C554.3 507.7 554.3 511.5 550.0 516.0 C545.7 520.5 541.3 521.2 536.0 517.5 C530.7 513.8 529.7 509.5 534.0 505.0 Z" fill="#cdcdcd"/>
      <path d="M627.5 502.0 C631.8 499.3 635.0 500.5 645.0 500.0 C655.0 499.5 659.9 497.9 665.0 500.0 C670.1 502.1 669.3 505.3 664.0 508.0 C658.7 510.7 654.3 509.5 645.0 510.0 C635.7 510.5 633.7 512.1 629.0 510.0 C624.3 507.9 623.2 504.7 627.5 502.0 Z" fill="#d4d4d4"/>
      <path d="M617.5 505.0 C620.5 502.7 623.7 503.1 627.0 506.0 C630.3 508.9 630.5 511.4 627.5 513.8 C624.5 516.1 621.3 515.9 618.0 513.0 C614.7 510.1 614.5 507.3 617.5 505.0 Z"/>
    </g>
  </g>
</g>
  <path d="M351 594 Q410 620 466 634.5" fill="none" stroke="#c4c4c4" stroke-width="0.9"/>
  <path d="M685 634.5 Q750 618 812 591" fill="none" stroke="#c4c4c4" stroke-width="0.9"/>
</svg>
<!--/CT--><div class="gold" style="left:231px;top:0;width:1.4px;height:273px"></div><div class="gold" style="left:231px;top:297px;width:1.4px;height:271px"></div><div class="gold" style="left:0;top:285px;width:219px;height:1.4px"></div><div class="gold" style="left:243px;top:285px;width:219px;height:1.4px"></div></div>
  <div class="vp" id="vp2" style="left:463px;width:230px"><!--S2--><svg style="left:0;top:0" width="230" height="568" viewBox="814 119 230 568"><defs><filter id="hb" x="-5%" y="-20%" width="110%" height="140%"><feGaussianBlur stdDeviation="1.6 0.4"/></filter><clipPath id="c2"><polygon points="904,395 1005,395 1018,411.5 898.5,411.5"/></clipPath></defs><g clip-path="url(#c2)"><g filter="url(#hb)"><rect x="899" y="395" width="9" height="16.5" fill="#6e6e6e"/><rect x="908" y="395" width="8" height="16.5" fill="#9a9a9a"/><rect x="916" y="395" width="5" height="16.5" fill="#6a6a6a"/><rect x="944" y="395" width="16" height="16.5" fill="#ececec"/><rect x="960" y="395" width="12" height="16.5" fill="#8c8c8c"/><rect x="972" y="395" width="25" height="16.5" fill="#ffffff"/><rect x="985" y="395" width="7" height="9.25" fill="#b5b5b5"/><rect x="962" y="402.25" width="18" height="9.25" fill="#7a7a7a"/><rect x="997" y="395" width="8" height="16.5" fill="#7c7c7c"/><rect x="1005" y="402.25" width="12" height="9.25" fill="#3c3c3c"/><rect x="1000" y="395" width="8" height="9.25" fill="#555"/><path d="M934 395 L938 411.5" stroke="#8a8a8a" stroke-width="1.2"/></g></g></svg><!--/S2--><div class="gold" style="left:115px;top:0;width:1.4px;height:273px"></div><div class="gold" style="left:115px;top:297px;width:1.4px;height:271px"></div><div class="gold" style="left:0;top:285px;width:103px;height:1.4px"></div><div class="gold" style="left:127px;top:285px;width:103px;height:1.4px"></div></div>
  <div class="vp" id="vp3" style="left:694px;width:235px"><!--S3--><svg style="left:0;top:0" width="235" height="568" viewBox="1045 119 235 568"><g filter="url(#hb)"><rect x="1045" y="395" width="17" height="16.5" fill="#8a8a8a"/><rect x="1050" y="395" width="6" height="16.5" fill="#a2a2a2"/><rect x="1062.5" y="395" width="15.0" height="16.5" fill="#ffffff"/><rect x="1077.5" y="395" width="24.5" height="16.5" fill="#9c9c9c"/><rect x="1083" y="402.25" width="6" height="9.25" fill="#d0d0d0"/><rect x="1092" y="395" width="6" height="9.25" fill="#c4c4c4"/><rect x="1102" y="395" width="22.4" height="16.5" fill="#ffffff"/><rect x="1124.4" y="395" width="15.0" height="16.5" fill="#5e5e5e"/><rect x="1129" y="395" width="3" height="16.5" fill="#a0a0a0"/><rect x="1139.4" y="395" width="3.6" height="16.5" fill="#f0f0f0"/><rect x="1143" y="395" width="9.5" height="16.5" fill="#505050"/><rect x="1163.8" y="395" width="3.2" height="16.5" fill="#777"/><rect x="1167" y="395" width="4.5" height="16.5" fill="#e4e4e4"/><rect x="1171.5" y="395" width="18.5" height="9.25" fill="#6c6c6c"/><rect x="1171.5" y="402.25" width="18.5" height="9.25" fill="#1c1c1c"/><rect x="1176" y="395" width="5" height="9.25" fill="#9a9a9a"/><rect x="1190" y="395" width="11.3" height="9.25" fill="#ffffff"/><rect x="1192" y="402.25" width="5" height="9.25" fill="#ffffff"/><rect x="1197" y="402.25" width="4.3" height="9.25" fill="#8a8a8a"/><rect x="1201.3" y="395" width="74.7" height="16.5" fill="#858585"/><rect x="1212" y="395" width="10" height="16.5" fill="#9a9a9a"/><rect x="1235" y="395" width="12" height="16.5" fill="#6e6e6e"/><rect x="1252" y="395" width="14" height="16.5" fill="#9c9c9c"/><rect x="1270" y="395" width="6" height="16.5" fill="#777"/></g></svg><!--/S3--><div class="gold" style="left:116px;top:0;width:1.4px;height:273px"></div><div class="gold" style="left:116px;top:297px;width:1.4px;height:271px"></div><div class="gold" style="left:0;top:285px;width:104px;height:1.4px"></div><div class="gold" style="left:128px;top:285px;width:104px;height:1.4px"></div></div>
  <div class="abs" style="left:462px;top:73px;width:1px;height:569px;background:#d9d9d9"></div>
  <div class="abs" style="left:693px;top:73px;width:1px;height:569px;background:#d9d9d9"></div>
  <!-- scrollbars -->
  <div class="sb" style="left:0;width:462px"><div class="trk" style="left:12px;width:395px"></div><div class="th" style="left:200px"><i></i></div>
    <div class="ar" style="left:419px"><svg style="left:5px;top:3px" width="8" height="12" viewBox="0 0 8 12"><polyline points="7,0.8 1.2,6 7,11.2" fill="none" stroke="#8a8a8a" stroke-width="1.3"/></svg></div><div class="ar" style="left:438px"><svg style="left:5px;top:3px" width="8" height="12" viewBox="0 0 8 12"><polyline points="1,0.8 6.8,6 1,11.2" fill="none" stroke="#8a8a8a" stroke-width="1.3"/></svg></div></div>
  <div class="sb" style="left:464px;width:229px"><div class="trk" style="left:12px;width:161px"></div><div class="th" style="left:84px"><i></i></div>
    <div class="ar" style="left:186px"><svg style="left:5px;top:3px" width="8" height="12" viewBox="0 0 8 12"><polyline points="7,0.8 1.2,6 7,11.2" fill="none" stroke="#8a8a8a" stroke-width="1.3"/></svg></div><div class="ar" style="left:205px"><svg style="left:5px;top:3px" width="8" height="12" viewBox="0 0 8 12"><polyline points="1,0.8 6.8,6 1,11.2" fill="none" stroke="#8a8a8a" stroke-width="1.3"/></svg></div></div>
  <div class="sb" style="left:695px;width:229px"><div class="trk" style="left:12px;width:162px"></div><div class="th" style="left:84px"><i></i></div>
    <div class="ar" style="left:187px"><svg style="left:5px;top:3px" width="8" height="12" viewBox="0 0 8 12"><polyline points="7,0.8 1.2,6 7,11.2" fill="none" stroke="#8a8a8a" stroke-width="1.3"/></svg></div><div class="ar" style="left:206px"><svg style="left:5px;top:3px" width="8" height="12" viewBox="0 0 8 12"><polyline points="1,0.8 6.8,6 1,11.2" fill="none" stroke="#8a8a8a" stroke-width="1.3"/></svg></div></div>
</div>

<div class="badge" style="left:283px;top:210px">1</div>
<div class="badge" style="left:165px;top:278px">2</div>
<div class="badge" style="left:345px;top:353px">3</div>
</body></html>
